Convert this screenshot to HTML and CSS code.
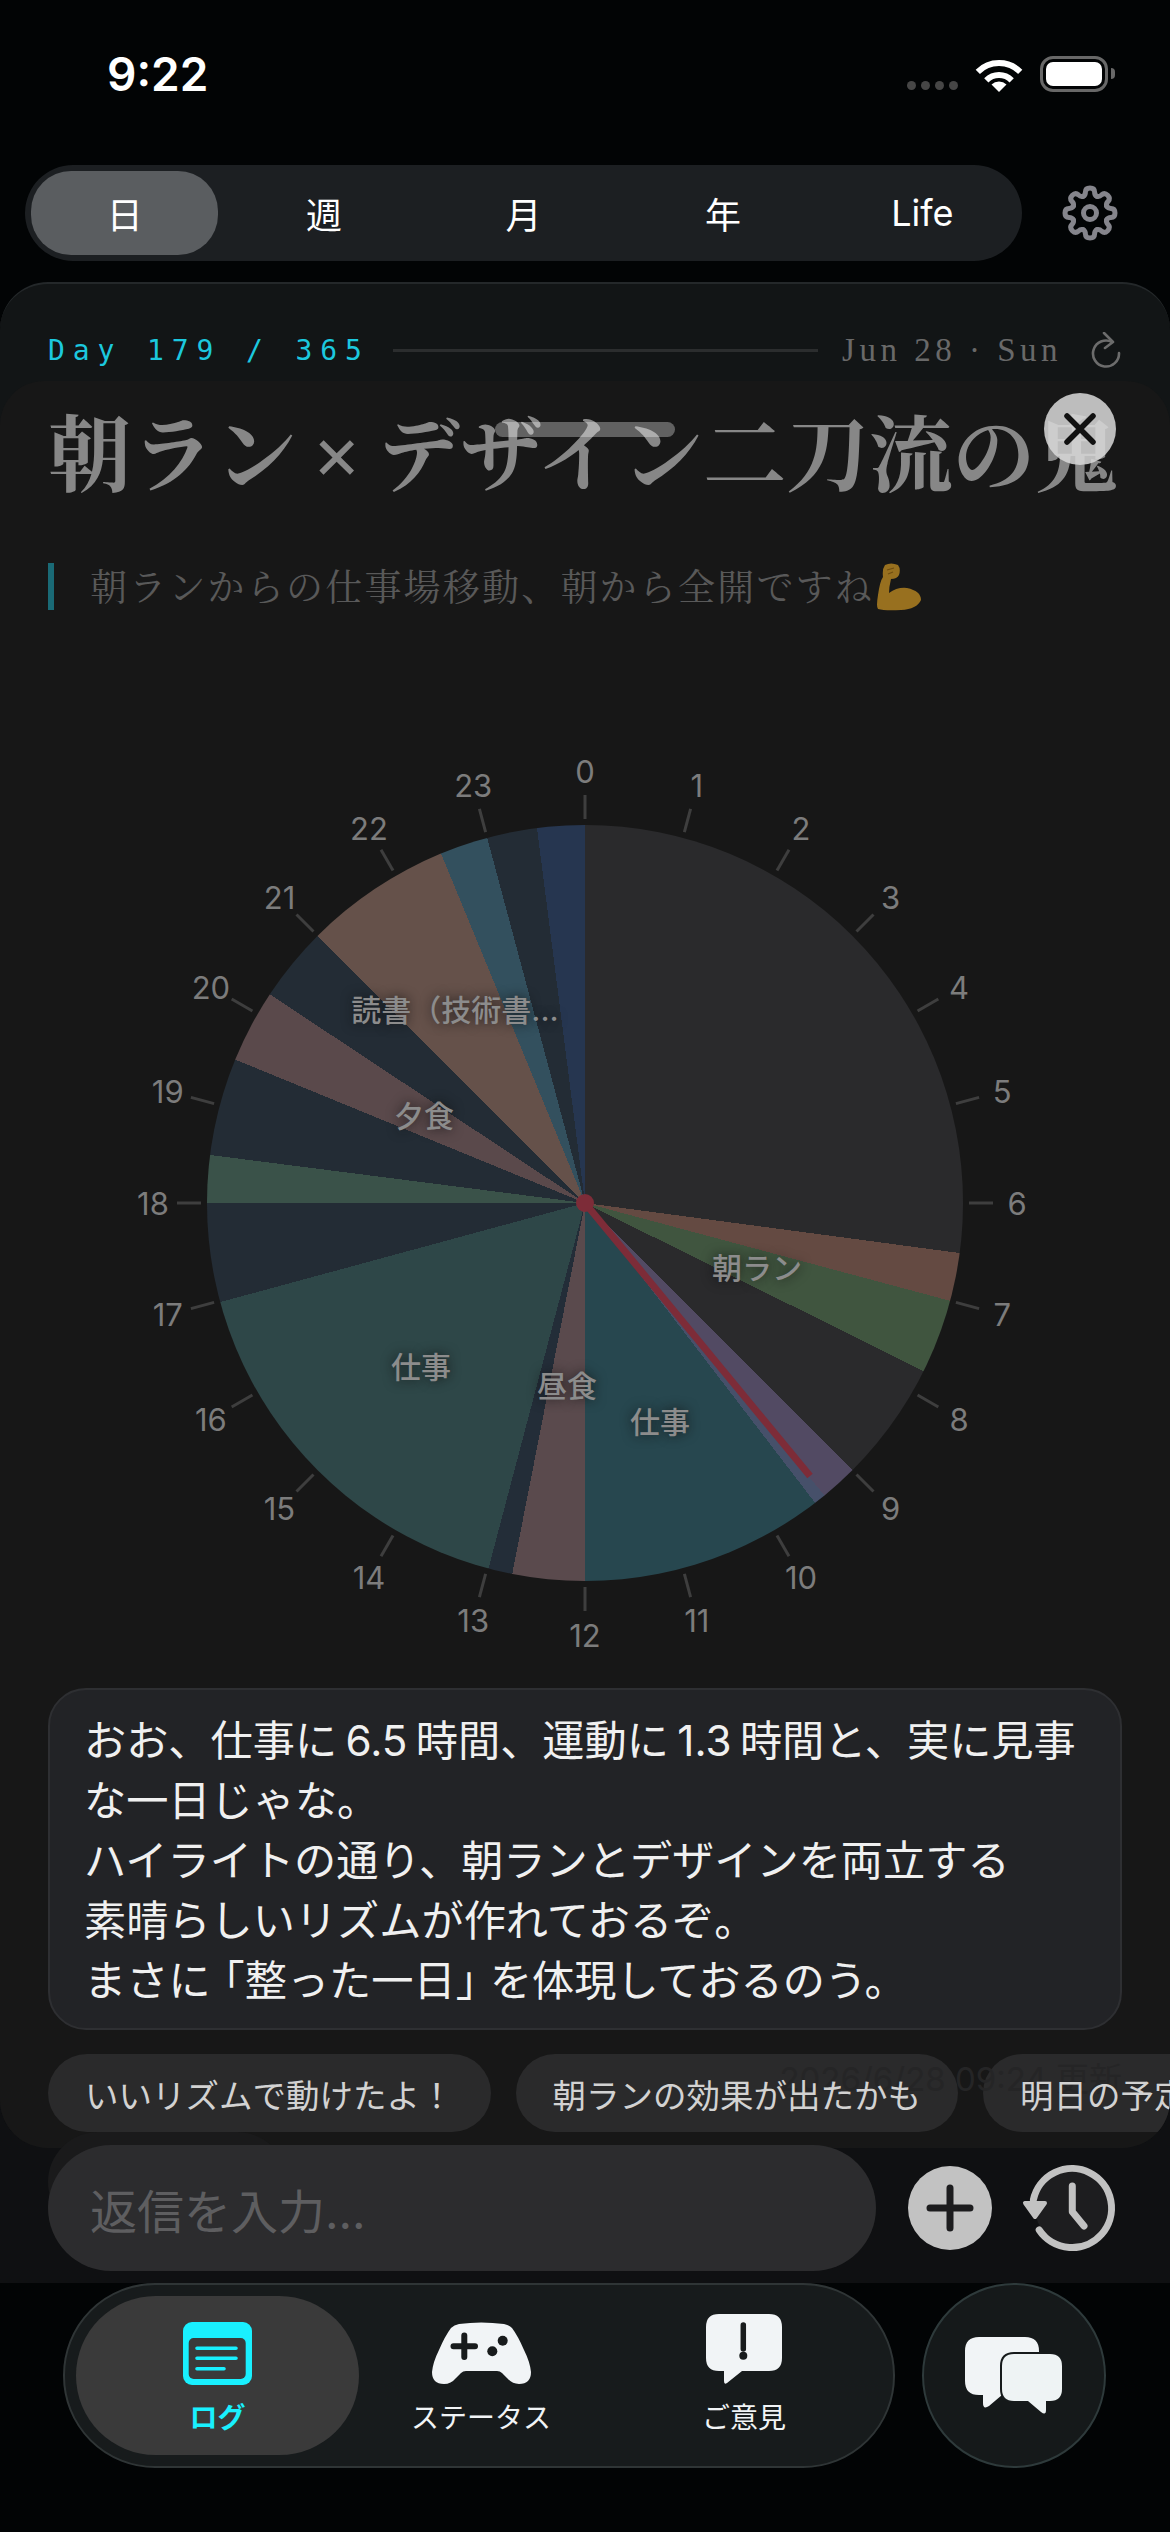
FILE: index.html
```html
<!DOCTYPE html>
<html lang="ja">
<head>
  <meta charset="UTF-8" />
  <title>Day Log</title>
  <meta name="viewport" content="width=device-width, initial-scale=1" />
  <link rel="stylesheet" href="styles.css">
</head>
<body>

  <header class="status">
    <span class="clock">9:22</span>
    <div class="status-icons">
      <div class="signal"><i></i><i></i><i></i><i></i></div>
      <svg class="wifi" width="48" height="38" viewBox="0 0 48 38">
        <path d="M2.8 16.8A30 30 0 0 1 45.2 16.8M11.3 25.3A18 18 0 0 1 36.7 25.3" fill="none" stroke="#fff" stroke-width="6"/>
        <path d="M24 37L16.5 29.5A11 11 0 0 1 31.5 29.5Z" fill="#fff"/>
      </svg>
      <div class="battery"><div class="battery-fill"></div></div>
    </div>
  </header>

  <div class="topbar">
    <nav class="range">
      <span class="range-item active">日</span>
      <span class="range-item">週</span>
      <span class="range-item">月</span>
      <span class="range-item">年</span>
      <span class="range-item">Life</span>
    </nav>
    <svg class="gear" width="56" height="56" viewBox="-28 -28 56 56" fill="none" stroke="#85858c" stroke-width="5" stroke-linecap="round" stroke-linejoin="round">
      <defs><path id="tooth" d="M-6.9 -16.6Q-4.5 -18 -4.6 -21Q-4.5 -25 0 -25Q4.5 -25 4.6 -21Q4.5 -18 6.9 -16.6"/></defs>
      <use href="#tooth"/>
      <use href="#tooth" transform="rotate(45)"/>
      <use href="#tooth" transform="rotate(90)"/>
      <use href="#tooth" transform="rotate(135)"/>
      <use href="#tooth" transform="rotate(180)"/>
      <use href="#tooth" transform="rotate(225)"/>
      <use href="#tooth" transform="rotate(270)"/>
      <use href="#tooth" transform="rotate(315)"/>
      <circle r="6.5"/>
    </svg>
  </div>

  <div class="content">
    <main class="card">
      <div class="day-row">
        <span class="day-count">Day 179 / 365</span>
        <span class="day-line"></span>
        <span class="day-date">Jun 28 · Sun</span>
        <svg class="refresh" width="32" height="36" viewBox="0 0 32 36" fill="none" stroke="#6c6c6c" stroke-width="2.6" stroke-linecap="round" stroke-linejoin="round">
          <path d="M22 10A13 13 0 1 0 29 21"/>
          <path d="M14 1L23 10L15 16"/>
        </svg>
      </div>

      <section class="sheet">
        <div class="grabber"></div>
        <button class="close">
          <svg width="32" height="32" viewBox="0 0 32 32" stroke="#111" stroke-width="5.5" stroke-linecap="round"><path d="M3 3L29 29M29 3L3 29"/></svg>
        </button>

        <h1 class="title">朝ラン<span class="title-x">×</span>デザイン二刀流の鬼</h1>
        <div class="quote">
          <span class="quote-text">朝ランからの仕事場移動、朝から全開ですね</span>
          <svg class="arm" width="45" height="48" viewBox="0 0 45 48">
            <path d="M8 2Q14 -1 21 2Q24 6 22 12Q20 16 14 16Q12 24 12 30Q20 24 30 25Q44 28 44 37Q40 46 24 47Q8 48 1 46Q-1 44 1 32Q3 18 6 14Q5 6 8 2Z" fill="#98701f"/>
            <path d="M10 7L17 5M11 11L16 9" stroke="#6f4d10" stroke-width="1.2" fill="none"/>
          </svg>
        </div>

        <div class="chart">
          <div class="pie"></div>
          <svg class="dial" width="960" height="960" viewBox="-480 -480 960 960">
            <g class="ticks">
              <line y1="-408" y2="-384"/>
              <line y1="-408" y2="-384" transform="rotate(15)"/>
              <line y1="-408" y2="-384" transform="rotate(30)"/>
              <line y1="-408" y2="-384" transform="rotate(45)"/>
              <line y1="-408" y2="-384" transform="rotate(60)"/>
              <line y1="-408" y2="-384" transform="rotate(75)"/>
              <line y1="-408" y2="-384" transform="rotate(90)"/>
              <line y1="-408" y2="-384" transform="rotate(105)"/>
              <line y1="-408" y2="-384" transform="rotate(120)"/>
              <line y1="-408" y2="-384" transform="rotate(135)"/>
              <line y1="-408" y2="-384" transform="rotate(150)"/>
              <line y1="-408" y2="-384" transform="rotate(165)"/>
              <line y1="-408" y2="-384" transform="rotate(180)"/>
              <line y1="-408" y2="-384" transform="rotate(195)"/>
              <line y1="-408" y2="-384" transform="rotate(210)"/>
              <line y1="-408" y2="-384" transform="rotate(225)"/>
              <line y1="-408" y2="-384" transform="rotate(240)"/>
              <line y1="-408" y2="-384" transform="rotate(255)"/>
              <line y1="-408" y2="-384" transform="rotate(270)"/>
              <line y1="-408" y2="-384" transform="rotate(285)"/>
              <line y1="-408" y2="-384" transform="rotate(300)"/>
              <line y1="-408" y2="-384" transform="rotate(315)"/>
              <line y1="-408" y2="-384" transform="rotate(330)"/>
              <line y1="-408" y2="-384" transform="rotate(345)"/>
            </g>
            <g class="hours">
              <text x="0" y="-432">0</text>
              <text x="111.8" y="-417.3">1</text>
              <text x="216" y="-374.1">2</text>
              <text x="305.5" y="-305.5">3</text>
              <text x="374.1" y="-216">4</text>
              <text x="417.3" y="-111.8">5</text>
              <text x="432" y="0">6</text>
              <text x="417.3" y="111.8">7</text>
              <text x="374.1" y="216">8</text>
              <text x="305.5" y="305.5">9</text>
              <text x="216" y="374.1">10</text>
              <text x="111.8" y="417.3">11</text>
              <text x="0" y="432">12</text>
              <text x="-111.8" y="417.3">13</text>
              <text x="-216" y="374.1">14</text>
              <text x="-305.5" y="305.5">15</text>
              <text x="-374.1" y="216">16</text>
              <text x="-417.3" y="111.8">17</text>
              <text x="-432" y="0">18</text>
              <text x="-417.3" y="-111.8">19</text>
              <text x="-374.1" y="-216">20</text>
              <text x="-305.5" y="-305.5">21</text>
              <text x="-216" y="-374.1">22</text>
              <text x="-111.8" y="-417.3">23</text>
            </g>
            <line class="hand" x1="0" y1="0" x2="225" y2="273"/>
            <circle class="hub" r="9"/>
          </svg>
          <span class="slice-label label-read">読書（技術書...</span>
          <span class="slice-label label-dinner">夕食</span>
          <span class="slice-label label-run">朝ラン</span>
          <span class="slice-label label-work1">仕事</span>
          <span class="slice-label label-lunch">昼食</span>
          <span class="slice-label label-work2">仕事</span>
        </div>

        <div class="bubble">
          おお、仕事に 6.5 時間、運動に 1.3 時間と、実に見事<br>
          な一日じゃな。<br>
          ハイライトの通り、朝ランとデザインを両立する<br>
          素晴らしいリズムが作れておるぞ。<br>
          まさ<span class="tight">に</span>「整った一日<span class="tight">」</span>を体現しておるのう。
        </div>

        <div class="chips">
          <span class="chip"><span class="chip-text">いいリズムで動けたよ！</span></span>
          <span class="chip"><span class="chip-text">朝ランの効果が出たかも</span></span>
          <span class="chip"><span class="chip-text">明日の予定を立てる</span></span>
        </div>
        <span class="updated">2026/6/28 09:24 更新</span>
      </section>
    </main>

    <div class="composer">
      <div class="reply">返信を入力...</div>
      <svg class="plus" width="84" height="84" viewBox="0 0 84 84">
        <circle cx="42" cy="42" r="42" fill="#c2c2c2"/>
        <path d="M22 42H62M42 22V62" stroke="#1c1c1e" stroke-width="7" stroke-linecap="round"/>
      </svg>
      <svg class="history" width="100" height="96" viewBox="0 0 100 96" fill="none" stroke="#c2c2c2" stroke-width="7" stroke-linecap="round" stroke-linejoin="round">
        <circle cx="52" cy="48" r="37" fill="#1d1d1f" stroke="none"/>
        <path d="M13.4 39.8A39.5 39.5 0 1 1 19.2 70"/>
        <path d="M5 43H25L15 57Z" fill="#c2c2c2" stroke-width="4"/>
        <path d="M52.3 26V51.7L64 66"/>
      </svg>
    </div>
  </div>

  <footer class="tabs">
    <nav class="tabbar">
      <a class="tab active">
        <svg width="69" height="63" viewBox="0 0 69 63">
          <rect width="69" height="63" rx="9" fill="#19f0ff"/>
          <rect x="5.7" y="16" width="57" height="41" rx="5" fill="#3a3a3a"/>
          <path d="M14 26.3H53M14 36.3H53M14 46.7H41" stroke="#19f0ff" stroke-width="3.6" stroke-linecap="round"/>
        </svg>
        <span>ログ</span>
      </a>
      <a class="tab">
        <svg width="99" height="63" viewBox="0 0 99 63">
          <path d="M19 6Q22 3 27 2Q49 -1 72 2Q77 3 80 6Q86 14 92 28Q98 40 99 50Q99 62 87 62Q80 62 75 56L70 51Q68 49 65 49H34Q31 49 29 51L24 56Q19 62 12 62Q0 62 0 50Q1 40 7 28Q13 14 19 6Z" fill="#f1f4f6"/>
          <path d="M21.5 24.3H43M32.3 13.5V35" stroke="#181b1c" stroke-width="6" stroke-linecap="round"/>
          <circle cx="70.7" cy="18.7" r="5" fill="#181b1c"/>
          <circle cx="60.3" cy="29.3" r="5" fill="#181b1c"/>
        </svg>
        <span>ステータス</span>
      </a>
      <a class="tab">
        <svg width="76" height="71" viewBox="0 0 76 71">
          <path d="M13 0H63Q76 0 76 13V44Q76 57 63 57H36L21 69Q18 71 18 67V57H13Q0 57 0 44V13Q0 0 13 0Z" fill="#f1f4f6"/>
          <path d="M37.3 11V35" stroke="#181b1c" stroke-width="5.5" stroke-linecap="round"/>
          <circle cx="37.3" cy="41.7" r="4" fill="#181b1c"/>
        </svg>
        <span>ご意見</span>
      </a>
    </nav>
    <button class="fab">
      <svg width="98" height="78" viewBox="0 0 98 78">
        <path d="M14 0H60Q74 0 74 14V44Q74 58 60 58H37L24 69Q18 73 18 66V58H14Q0 58 0 44V14Q0 0 14 0Z" fill="#f1f4f6"/>
        <path d="M49 17H85Q97 17 97 29V52Q97 64 85 64H81V73Q81 79 76 75L63 64H49Q37 64 37 52V29Q37 17 49 17Z" fill="#eef3f4" stroke="#161a1b" stroke-width="4" paint-order="stroke"/>
      </svg>
    </button>
  </footer>

</body>
</html>
```

FILE: styles.css
```css
:root {
  --sans: 'Inter', 'Noto Sans CJK JP', sans-serif;
  --mincho: 'Noto Serif CJK JP', 'Noto Sans CJK JP', serif;
  --cyan: #19f0ff;
}

* {
  box-sizing: border-box;
}

body {
  margin: 0;
  width: 1170px;
  height: 2532px;
  overflow: hidden;
  background: #020405;
  color: #fff;
  font-family: var(--sans);
}

/* status bar */
.status {
  height: 165px;
  padding: 51px 62px 0 107px;
  display: flex;
  justify-content: space-between;
  align-items: flex-start;
}

.clock {
  font-size: 46px;
  font-weight: 600;
  line-height: 47px;
}

.status-icons {
  display: flex;
  align-items: flex-start;
  padding-top: 4px;
}

.signal {
  display: flex;
  gap: 5px;
  margin: 26px 17px 0 0;
}

.signal i {
  width: 9px;
  height: 9px;
  border-radius: 50%;
  background: #464646;
}

.wifi {
  margin-right: 17px;
}

.battery {
  position: relative;
  width: 68px;
  height: 36px;
  padding: 3px;
  border: 3px solid #686868;
  border-radius: 13px;
  margin-top: 1px;
}

.battery::after {
  content: '';
  position: absolute;
  right: -10px;
  top: 9px;
  width: 4px;
  height: 11px;
  background: #686868;
  border-radius: 0 4px 4px 0;
}

.battery-fill {
  height: 100%;
  background: #fff;
  border-radius: 7px;
}

/* range switcher */
.topbar {
  display: flex;
  align-items: center;
  padding-left: 25px;
  gap: 40px;
}

.range {
  width: 997px;
  height: 96px;
  display: flex;
  border-radius: 48px;
  background: #1c1f22;
}

.range-item {
  flex: 1;
  margin: 6px;
  display: flex;
  align-items: center;
  justify-content: center;
  font-size: 36px;
  border-radius: 40px;
}

.range-item.active {
  background: #5a5d60;
}

/* main card */
.content {
  padding-top: 21px;
  background: linear-gradient(to bottom, #020405 60%, #0f1012 60%);
}

.card {
  height: 1866px;
  display: flex;
  flex-direction: column;
  overflow: hidden;
  background: #121516;
  border-top: 2px solid #24282a;
  border-radius: 48px;
}

.day-row {
  height: 40px;
  margin: 46px 48px 11px;
  display: flex;
  align-items: center;
}

.day-count {
  font-family: 'DejaVu Sans Mono', monospace;
  font-size: 28px;
  letter-spacing: 7.9px;
  color: #1cc8de;
  white-space: nowrap;
}

.day-line {
  flex: 1;
  height: 3px;
  margin: 0 24px 0 23px;
  background: #2b2d2e;
}

.day-date {
  font-family: 'Liberation Serif', serif;
  font-size: 33px;
  letter-spacing: 4.5px;
  color: #696969;
  white-space: nowrap;
}

.refresh {
  margin: 0 0 0 28px;
}

/* sheet over the card */
.sheet {
  position: relative;
  flex: 1;
  background: #171717;
  border-radius: 44px 44px 0 0;
  overflow: hidden;
}

.grabber {
  position: absolute;
  left: 495px;
  top: 41px;
  width: 180px;
  height: 15px;
  border-radius: 8px;
  background: rgba(255, 255, 255, 0.32);
}

.close {
  position: absolute;
  left: 1044px;
  top: 12px;
  width: 72px;
  height: 72px;
  padding: 0;
  display: flex;
  align-items: center;
  justify-content: center;
  border: none;
  border-radius: 50%;
  background: rgba(216, 216, 216, 0.86);
}

.title {
  margin: 18px 0 0 48px;
  height: 100px;
  font-family: var(--mincho);
  font-size: 83px;
  font-weight: 700;
  line-height: 100px;
  color: #878787;
  white-space: nowrap;
}

.title-x {
  display: inline-block;
  width: 80px;
  text-align: center;
  font-family: 'Liberation Serif', serif;
}

.quote {
  margin: 64px 0 0 48px;
  height: 47px;
  padding-left: 36px;
  display: flex;
  align-items: center;
  border-left: 6px solid #1a6a76;
  color: #595959;
  white-space: nowrap;
}

.quote-text {
  margin-top: -4px;
  font-family: var(--mincho);
  font-size: 37px;
  letter-spacing: 2.2px;
}

.arm {
  margin-left: 3px;
}

/* 24 hour chart */
.chart {
  position: relative;
  width: 960px;
  height: 960px;
  margin: 113px 0 0 105px;
}

.pie {
  position: absolute;
  left: 102px;
  top: 102px;
  width: 756px;
  height: 756px;
  border-radius: 50%;
  background: conic-gradient(
    #2a2a2c 0deg 97.6deg,
    #644a42 97.6deg 105deg,
    #40553f 105deg 116.4deg,
    #2a2a2c 116.4deg 135deg,
    #524a63 135deg 140.7deg,
    #46506a 140.7deg 142.5deg,
    #27474f 142.5deg 180deg,
    #5a4a4d 180deg 191.1deg,
    #232d38 191.1deg 194.8deg,
    #2e4748 194.8deg 254.8deg,
    #232c35 254.8deg 270deg,
    #3a5249 270deg 277.3deg,
    #232c35 277.3deg 292.3deg,
    #5a494b 292.3deg 303.5deg,
    #232c35 303.5deg 315deg,
    #65514a 315deg 337.6deg,
    #33505e 337.6deg 345deg,
    #232c35 345deg 352.7deg,
    #263650 352.7deg 360deg
  );
}

.dial {
  position: absolute;
  left: 0;
  top: 0;
}

.ticks line {
  stroke: #3e3e3e;
  stroke-width: 3;
}

.hours text {
  font-family: 'Inter', sans-serif;
  font-size: 31px;
  fill: #7c7c7c;
  text-anchor: middle;
  dominant-baseline: central;
}

.hand {
  stroke: #7d2c38;
  stroke-width: 7;
}

.hub {
  fill: #7d2c38;
}

.slice-label {
  position: absolute;
  transform: translate(-50%, -50%);
  font-size: 30px;
  font-weight: 500;
  color: #8c8c8c;
  text-shadow: 0 0 12px rgba(15, 15, 15, 0.8);
  white-space: nowrap;
}

.label-read { left: 350px; top: 285px; }
.label-dinner { left: 319px; top: 391px; }
.label-run { left: 652px; top: 543px; }
.label-work1 { left: 316px; top: 642px; }
.label-lunch { left: 462px; top: 661px; }
.label-work2 { left: 555px; top: 697px; }

/* reply area */
.bubble {
  margin: 5px 48px 0;
  height: 342px;
  padding: 21px 34px;
  background: #222326;
  border: 2px solid #2e2f32;
  border-radius: 38px;
  font-size: 42.2px;
  line-height: 60px;
  word-spacing: -3.5px;
  color: #f0f0f0;
  white-space: nowrap;
}

.tight {
  letter-spacing: -8px;
}

.chips {
  display: flex;
  gap: 25px;
  margin: 24px 0 0 48px;
  white-space: nowrap;
}

.chip {
  height: 78px;
  flex: none;
  padding: 0 37px;
  display: flex;
  align-items: center;
  background: #2a2a2b;
  border-radius: 39px;
  font-size: 33.5px;
  color: #d2d2d2;
}

.chip-text {
  position: relative;
  z-index: 2;
}

.updated {
  position: absolute;
  z-index: 1;
  right: 48px;
  top: 1672px;
  font-size: 33px;
  color: #252526;
  white-space: nowrap;
}

.composer {
  position: relative;
  height: 138px;
  margin-top: -3px;
  padding-left: 48px;
  display: flex;
  align-items: flex-start;
}

.composer::before {
  content: '';
  position: absolute;
  left: 48px;
  top: -13px;
  width: 239px;
  height: 100px;
  border-radius: 50px;
  background: #1a1a1b;
}

.reply {
  position: relative;
  width: 828px;
  height: 126px;
  padding-left: 42px;
  display: flex;
  align-items: center;
  background: #2c2c2e;
  border-radius: 63px;
  font-size: 47px;
  color: #5e5e60;
}

.plus {
  position: relative;
  margin: 21px 28px 0 32px;
}

.history {
  position: relative;
  margin-top: 15px;
}

/* bottom tabs */
.tabs {
  display: flex;
  gap: 27px;
  padding-left: 63px;
}

.tabbar {
  width: 832px;
  height: 185px;
  padding: 11px;
  display: grid;
  grid-template-columns: 283px 244px 282px;
  background: #171b1c;
  border: 2px solid #2f3536;
  border-radius: 92px;
}

.tab {
  display: flex;
  flex-direction: column;
  align-items: center;
  justify-content: flex-end;
  padding-bottom: 19px;
  gap: 15px;
  font-size: 28px;
  line-height: 36px;
  color: #f1f4f6;
}

.tab.active {
  background: #3a3a3a;
  border-radius: 80px;
  color: var(--cyan);
  font-weight: 700;
}

.fab {
  width: 184px;
  height: 185px;
  padding: 0;
  display: flex;
  align-items: center;
  justify-content: center;
  background: #15191a;
  border: 2px solid #2e3a3b;
  border-radius: 50%;
}
```
